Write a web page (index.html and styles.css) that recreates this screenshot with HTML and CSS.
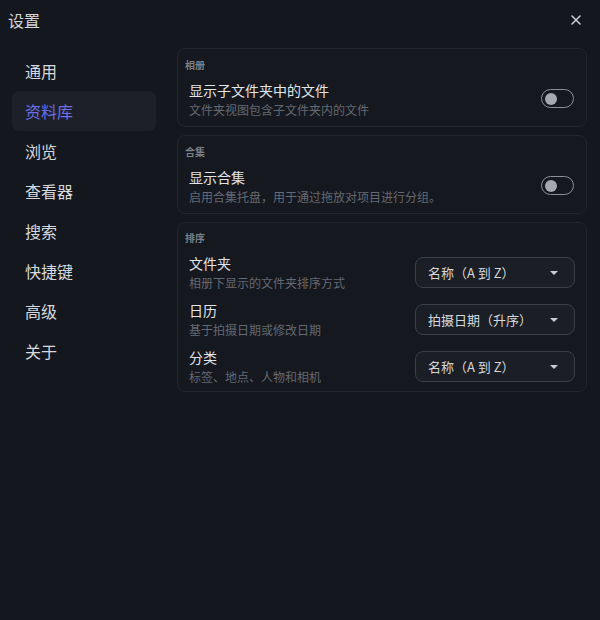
FILE: index.html
```html
<!DOCTYPE html>
<html lang="zh-CN">
<head>
<meta charset="utf-8">
<title>设置</title>
<link rel="stylesheet" href="styles.css">
</head>
<body>
<div class="window">
  <header class="titlebar">
    <span class="title">设置</span>
    <button class="close" aria-label="关闭">
      <svg width="12" height="12" viewBox="0 0 12 12"><path d="M2 2L10 10M10 2L2 10" stroke="#d0d3d8" stroke-width="1.5" stroke-linecap="round"/></svg>
    </button>
  </header>
  <div class="body">
    <nav class="sidebar">
      <div class="nav-item">通用</div>
      <div class="nav-item active">资料库</div>
      <div class="nav-item">浏览</div>
      <div class="nav-item">查看器</div>
      <div class="nav-item">搜索</div>
      <div class="nav-item">快捷键</div>
      <div class="nav-item">高级</div>
      <div class="nav-item">关于</div>
    </nav>
    <main class="content">
      <section class="card">
        <div class="card-label">相册</div>
        <div class="row">
          <div class="row-text">
            <div class="row-title">显示子文件夹中的文件</div>
            <div class="row-desc">文件夹视图包含子文件夹内的文件</div>
          </div>
          <span class="toggle"><span class="knob"></span></span>
        </div>
      </section>
      <section class="card">
        <div class="card-label">合集</div>
        <div class="row">
          <div class="row-text">
            <div class="row-title">显示合集</div>
            <div class="row-desc">启用合集托盘，用于通过拖放对项目进行分组。</div>
          </div>
          <span class="toggle"><span class="knob"></span></span>
        </div>
      </section>
      <section class="card sort">
        <div class="card-label">排序</div>
        <div class="row">
          <div class="row-text">
            <div class="row-title">文件夹</div>
            <div class="row-desc">相册下显示的文件夹排序方式</div>
          </div>
          <div class="select"><span>名称（A 到 Z）</span><span class="caret"></span></div>
        </div>
        <div class="row">
          <div class="row-text">
            <div class="row-title">日历</div>
            <div class="row-desc">基于拍摄日期或修改日期</div>
          </div>
          <div class="select"><span>拍摄日期（升序）</span><span class="caret"></span></div>
        </div>
        <div class="row">
          <div class="row-text">
            <div class="row-title">分类</div>
            <div class="row-desc">标签、地点、人物和相机</div>
          </div>
          <div class="select"><span>名称（A 到 Z）</span><span class="caret"></span></div>
        </div>
      </section>
    </main>
  </div>
</div>
</body>
</html>
```

FILE: styles.css
```css
* { box-sizing: border-box; }

html, body {
  margin: 0;
  height: 100%;
  background: #14171d;
  font-family: "Noto Sans CJK SC", "Noto Sans", sans-serif;
  color: #dfe1e5;
}

.window {
  width: 600px;
  height: 620px;
  display: flex;
  flex-direction: column;
}

.titlebar {
  height: 40px;
  display: flex;
  align-items: center;
  justify-content: space-between;
  padding: 0 12px 0 8px;
}

.title {
  font-size: 16px;
  color: #d4d7dc;
}

.close {
  width: 24px;
  height: 24px;
  border: 0;
  background: transparent;
  padding: 0;
  display: flex;
  align-items: center;
  justify-content: center;
}

.body {
  display: flex;
  flex: 1;
}

.sidebar {
  width: 177px;
  padding: 11px 0 0 12px;
  display: flex;
  flex-direction: column;
}

.nav-item {
  width: 144px;
  height: 40px;
  line-height: 40px;
  padding-left: 13px;
  font-size: 16px;
  color: #d6d9de;
  border-radius: 7px;
}

.nav-item.active {
  background: #1d2029;
  color: #6c6fe6;
}

.content {
  width: 410px;
  padding-top: 8px;
  display: flex;
  flex-direction: column;
  gap: 8px;
}

.card {
  border: 1px solid #21252d;
  border-radius: 8px;
  background: #15181e;
  padding: 9px 11px 7px 7px;
  display: flex;
  flex-direction: column;
}

.card.sort {
  padding-top: 8px;
  padding-bottom: 5px;
}

.card-label {
  font-size: 10px;
  line-height: 14px;
  font-weight: 700;
  color: #7b808a;
  margin-bottom: 8px;
}

.row {
  display: flex;
  align-items: center;
  justify-content: space-between;
  padding-left: 4px;
}

.sort .row + .row {
  margin-top: 8px;
}

.row-title {
  font-size: 14px;
  line-height: 20px;
  color: #e3e5e9;
}

.row-desc {
  font-size: 12px;
  line-height: 19px;
  color: #646973;
}

.toggle {
  width: 33px;
  height: 19px;
  border: 1.5px solid #8d9098;
  border-radius: 10px;
  display: flex;
  align-items: center;
  padding-left: 3px;
  margin-right: 1px;
  margin-top: -2px;
}

.knob {
  width: 12px;
  height: 12px;
  border-radius: 50%;
  background: #a5a8b0;
}

.select {
  width: 160px;
  height: 31px;
  border: 1px solid #3a3e47;
  border-radius: 8px;
  background: #1b1e25;
  display: flex;
  align-items: center;
  justify-content: space-between;
  padding: 0 16px 0 12px;
  font-size: 13px;
  color: #d5d7db;
}

.caret {
  width: 0;
  height: 0;
  border-left: 4px solid transparent;
  border-right: 4px solid transparent;
  border-top: 4px solid #c9ccd2;
}
```
